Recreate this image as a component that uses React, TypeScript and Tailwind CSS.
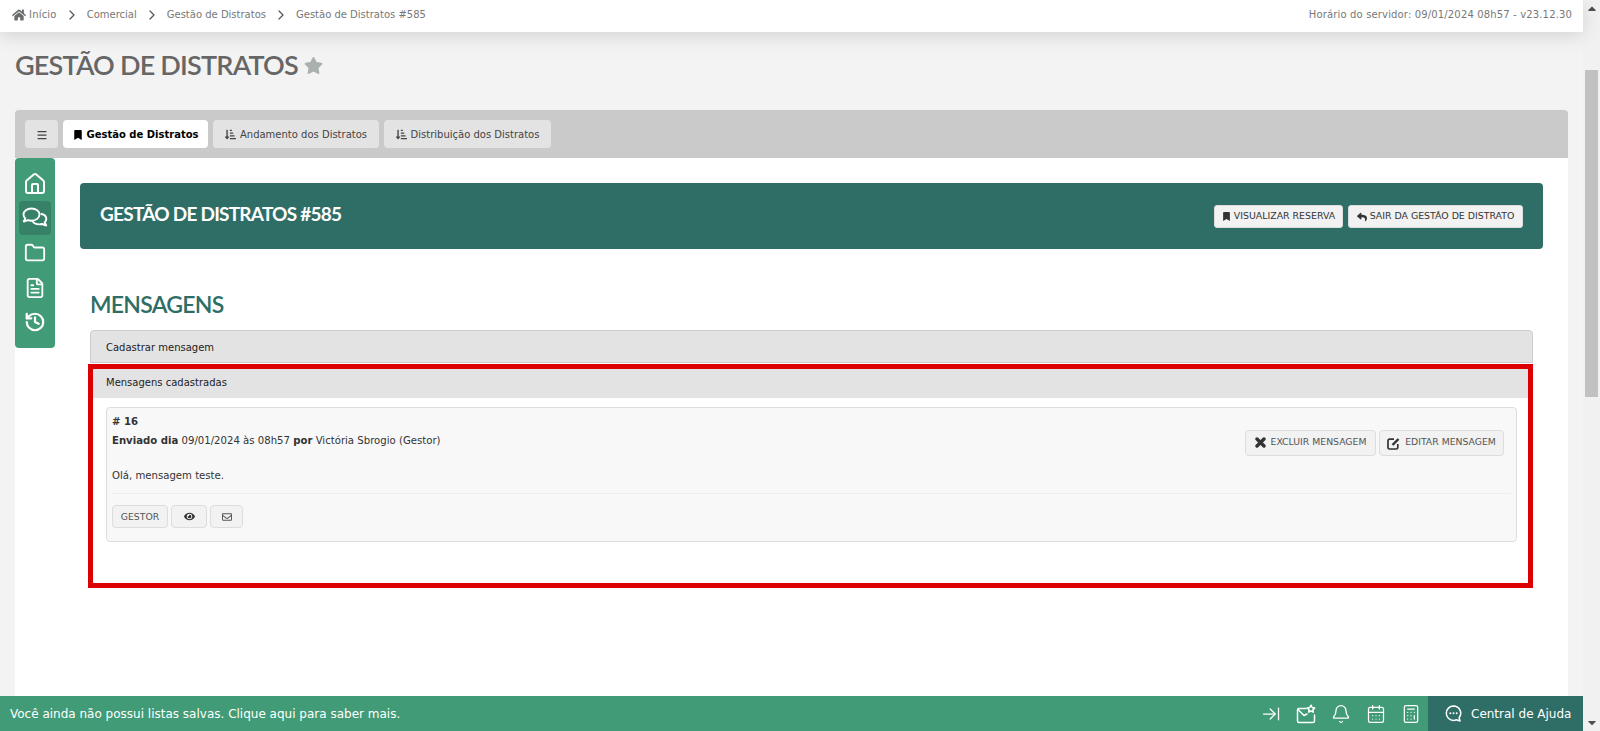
import React from "react";
import { FaHome, FaStar, FaBookmark, FaSortAmountDownAlt, FaReply, FaEye, FaRegEnvelope, FaCaretUp, FaCaretDown } from "react-icons/fa";
import { House, Folder, FileText, History, ArrowRightToLine, Bell, CalendarDays, Calculator, Menu, ChevronRight } from "lucide-react";

const Chats = () => (
  <svg width="26" height="22" viewBox="0 0 26 22" fill="none" stroke="currentColor" strokeWidth="1.9" strokeLinejoin="round" strokeLinecap="round">
    <path d="M9.5 1.5c-4.5 0-8 2.6-8 6 0 1.500.7 2.900 1.800 3.900L1.800 14.500l4.200-1.300c1.100.4 2.300.5 3.500.5 4.500 0 8-2.800 8-6.200s-3.500-6-8-6z" />
    <path d="M19.500 7c2.800.6 4.800 2.500 4.800 4.900 0 1.300-.6 2.500-1.600 3.400l1.500 3.200-4.200-1.500c-.9.3-1.800.4-2.800.4-3 0-5.600-1.300-6.600-3.300" />
  </svg>
);

const MailStar = () => (
  <svg width="20" height="20" viewBox="0 0 20 20" fill="none" stroke="currentColor" strokeWidth="1.500" strokeLinejoin="round" strokeLinecap="round">
    <path d="M10 4.500H3a1.500 1.500 0 0 0-1.500 1.500v11A1.500 1.500 0 0 0 3 18.500h14a1.500 1.500 0 0 0 1.500-1.500v-6" />
    <path d="M2 5.500l6 6 3-1.500" />
    <path d="M15 1.200l1.200 2.300 2.500.4-1.800 1.800.4 2.500-2.300-1.200-2.300 1.200.4-2.500-1.800-1.800 2.500-.4z" />
  </svg>
);

const HelpBubble = () => (
  <svg width="17" height="17" viewBox="0 0 17 17" fill="none" stroke="currentColor" strokeWidth="1.5" strokeLinejoin="round">
    <path d="M8.500 1a7.200 7.200 0 1 0 0 14.400c1 0 2-.2 2.900-.6l3.600 1.200-.9-3.300a7.200 7.200 0 0 0-5.600-11.700z" />
    <circle cx="5.300" cy="8.200" r="1" fill="currentColor" stroke="none" />
    <circle cx="8.500" cy="8.200" r="1" fill="currentColor" stroke="none" />
    <circle cx="11.700" cy="8.200" r="1" fill="currentColor" stroke="none" />
  </svg>
);

const HeavyX = () => (
  <svg width="11" height="11" viewBox="0 0 11 11" className="mt-[2px]" stroke="#333" strokeWidth="3.4" strokeLinecap="round">
    <path d="M2 2l7 7M9 2l-7 7" />
  </svg>
);

const HeavyEdit = () => (
  <svg width="13" height="13" viewBox="0 0 13 13" className="mt-[2px]" fill="none" stroke="#333">
    <path d="M7 2.200H2.500A1.500 1.500 0 0 0 1 3.700v7A1.300 1.300 0 0 0 2.300 12h7a1.500 1.500 0 0 0 1.500-1.500V7" strokeWidth="1.700" />
    <path d="M5.500 8l6-6" strokeWidth="2.400" />
  </svg>
);

const Sep = () => <ChevronRight size={16} strokeWidth={1.8} className="mx-[7px] text-[#555]" />;

const Tab = ({ active, className = "", children }: { active?: boolean; className?: string; children: React.ReactNode }) => (
  <div className={`flex h-[28px] items-center justify-center rounded-[4px] pt-[1px] text-[10px] ${active ? "bg-white font-bold text-black" : "bg-[#e3e3e3] text-[#444]"} ${className}`}>{children}</div>
);

const Light = ({ className = "", children }: { className?: string; children: React.ReactNode }) => (
  <div className={`flex h-[23px] items-center justify-center gap-[3px] whitespace-nowrap rounded-[3px] border border-[#ddd] bg-[#f2f2f2] text-[9.4px] text-[#333] ${className}`}>{children}</div>
);

const Small = ({ className = "", children }: { className?: string; children: React.ReactNode }) => (
  <div className={`flex h-[23px] items-center justify-center rounded-[4px] border border-[#ddd] bg-[#f2f2f2] text-[9.3px] text-[#555] ${className}`}>{children}</div>
);

export default function App() {
  return (
    <div className="flex h-[731px] w-[1600px] overflow-hidden bg-[#f3f3f3] font-['DejaVu_Sans','Liberation_Sans',sans-serif]">
      <div className="flex w-[1583px] flex-col">
        <header className="relative z-10 flex h-[32px] items-center justify-between bg-white pb-[3px] pl-[12px] pr-[11px] text-[10px] text-[#777] shadow-[0_4px_18px_rgba(0,0,0,0.13)]">
          <div className="flex items-center">
            <FaHome className="mr-[3px] text-[14px] text-[#6b6b6b]" />
            <span className="tracking-[0.2px]">Início</span><Sep />
            <span>Comercial</span><Sep />
            <span>Gestão de Distratos</span><Sep />
            <span>Gestão de Distratos #585</span>
          </div>
          <div className="tracking-[0.15px]">Horário do servidor: 09/01/2024 08h57 - v23.12.30</div>
        </header>

        <div className="flex h-[78px] items-start gap-[6px] pl-[15px] pt-[16px]">
          <h1 className="font-['Lato',sans-serif] text-[27px] font-semibold leading-[34px] tracking-[-0.8px] text-[#666]">GESTÃO DE DISTRATOS</h1>
          <FaStar className="mt-[8px] text-[19px] text-[#a9b0ae]" />
        </div>

        <div className="mx-[15px] flex h-[48px] items-center gap-[5px] rounded-t-[4px] bg-[#cacaca] pl-[10px]">
          <Tab className="w-[33px]"><Menu size={12} strokeWidth={2.5} /></Tab>
          <Tab active className="w-[145px]"><FaBookmark className="mr-[4px] text-[10px]" />Gestão de Distratos</Tab>
          <Tab className="w-[166px]"><FaSortAmountDownAlt className="mr-[4px] text-[11px]" />Andamento dos Distratos</Tab>
          <Tab className="w-[167px]"><FaSortAmountDownAlt className="mr-[4px] text-[11px]" />Distribuição dos Distratos</Tab>
        </div>

        <div className="mx-[15px] flex flex-1 items-start bg-white">
          <nav className="flex h-[190px] w-[40px] flex-col items-center rounded-[4px] bg-[#419b76] pt-[9px] text-white">
            <div className="flex h-[34px] items-center justify-center"><House size={24} strokeWidth={2} /></div>
            <div className="flex h-[34px] w-[32px] items-center justify-center rounded-[4px] bg-[#388169]"><Chats /></div>
            <div className="flex h-[36px] items-center justify-center"><Folder size={22} strokeWidth={2} /></div>
            <div className="flex h-[33px] items-center justify-center"><FileText size={22} strokeWidth={2} /></div>
            <div className="flex h-[36px] items-center justify-center"><History size={22} strokeWidth={2.4} /></div>
          </nav>

          <main className="flex-1 px-[25px] pt-[25px]">
            <section className="flex h-[66px] items-start justify-between rounded-[4px] bg-[#2f6e66] px-[20px]">
              <h2 className="pt-[19px] font-['Lato',sans-serif] text-[19px] font-bold leading-[24px] tracking-[-0.75px] text-white">GESTÃO DE DISTRATOS #585</h2>
              <div className="flex gap-[5px] pt-[22px]">
                <Light className="w-[129px]"><FaBookmark className="text-[9px]" />VISUALIZAR RESERVA</Light>
                <Light className="w-[175px]"><FaReply className="text-[10px]" />SAIR DA GESTÃO DE DISTRATO</Light>
              </div>
            </section>

            <div className="px-[10px]">
              <h3 className="mt-[41px] font-['Lato',sans-serif] text-[23px] font-semibold leading-[28px] tracking-[-0.75px] text-[#2f6e66]">MENSAGENS</h3>
              <div className="mt-[12px] flex h-[33px] items-center rounded-t-[4px] border border-[#ccc] bg-[#e3e3e3] pl-[15px] pt-[1px] text-[10px] text-[#222]">Cadastrar mensagem</div>

              <div className="-ml-[2px] mt-[1px] h-[224px] border-[5px] border-[#dc0000] bg-white">
                <div className="flex h-[29px] items-center bg-[#e3e3e3] pb-[2px] pl-[13px] text-[10px] text-[#222]">Mensagens cadastradas</div>
                <div className="ml-[13px] mr-[11px] mt-[9px] h-[135px] rounded-[4px] border border-[#ddd] bg-[#f8f8f8] px-[5px] pt-[7px] text-[10.15px] text-[#333]">
                  <div className="flex items-start justify-between">
                    <div>
                      <div className="font-bold leading-[14px]"># 16</div>
                      <div className="mt-[5px] leading-[14px]"><b>Enviado dia</b> 09/01/2024 às 08h57 <b>por</b> Victória Sbrogio (Gestor)</div>
                      <div className="mt-[21px] leading-[14px]">Olá, mensagem teste.</div>
                    </div>
                    <div className="mr-[7px] mt-[15px] flex gap-[3px]">
                      <Small className="h-[26px] w-[131px] items-start gap-[5px] pt-[4px]"><HeavyX />EXCLUIR MENSAGEM</Small>
                      <Small className="h-[26px] w-[125px] items-start gap-[5px] pt-[4px]"><HeavyEdit />EDITAR MENSAGEM</Small>
                    </div>
                  </div>
                  <div className="mt-[10px] flex gap-[3px] border-t border-[#eee] pt-[11px]">
                    <Small className="w-[56px]">GESTOR</Small>
                    <Small className="w-[36px]"><FaEye className="text-[11px] text-[#333]" /></Small>
                    <Small className="w-[33px]"><FaRegEnvelope className="text-[10px]" /></Small>
                  </div>
                </div>
              </div>
            </div>
          </main>
        </div>

        <footer className="flex h-[35px] items-center justify-between bg-[#419b76] pl-[10px] text-[12px] text-white">
          <span>Você ainda não possui listas salvas. Clique aqui para saber mais.</span>
          <div className="flex h-full items-center">
            <div className="flex items-center gap-[15px] pr-[7px]">
              <ArrowRightToLine size={20} strokeWidth={1.5} />
              <MailStar />
              <Bell size={20} strokeWidth={1.6} />
              <CalendarDays size={20} strokeWidth={1.5} />
              <Calculator size={20} strokeWidth={1.5} />
            </div>
            <div className="flex h-full w-[155px] items-center gap-[9px] bg-[#2f6e66] pl-[17px]">
              <HelpBubble />
              <span>Central de Ajuda</span>
            </div>
          </div>
        </footer>
      </div>

      <div className="flex w-[17px] flex-col items-center bg-[#f1f1f1] text-[#505050]">
        <FaCaretUp className="mt-[2px] h-[13px] text-[10px]" />
        <div className="mt-[55px] h-[327px] w-[13px] bg-[#c1c1c1]" />
        <FaCaretDown className="mb-[2px] mt-auto h-[13px] text-[10px]" />
      </div>
    </div>
  );
}
